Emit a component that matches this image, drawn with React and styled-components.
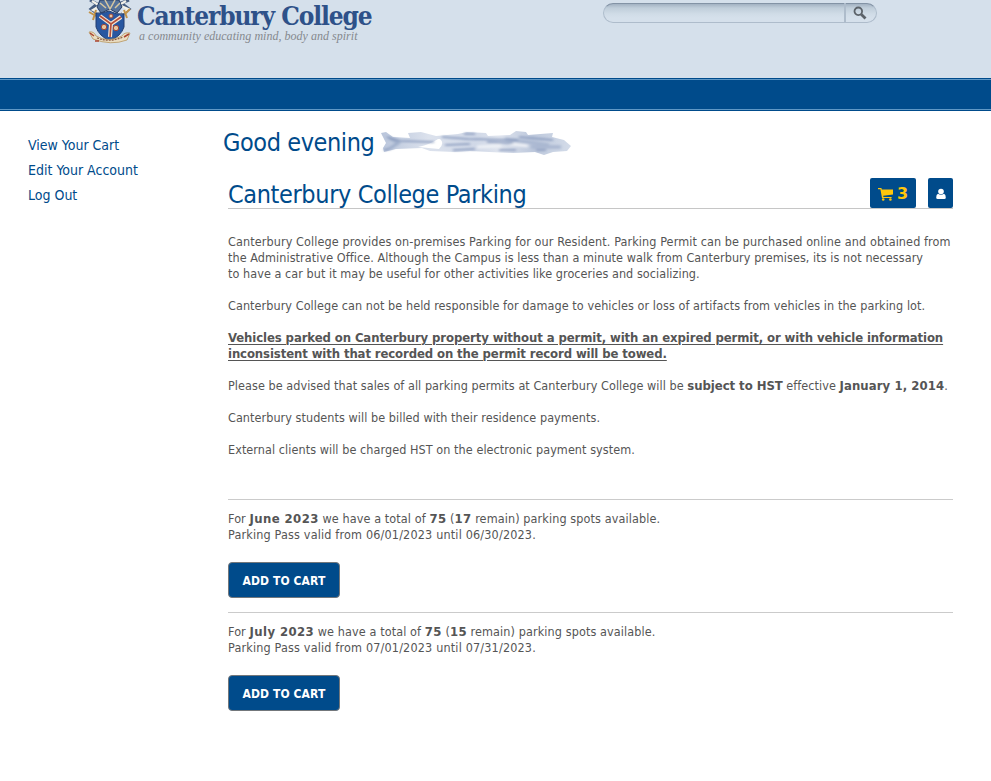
import React from 'react';
import styled, { createGlobalStyle } from 'styled-components';

const blue = '#004b8b';
const sans = '"DejaVu Sans Condensed", "DejaVu Sans", sans-serif';

const GlobalStyle = createGlobalStyle`
  * { box-sizing: border-box; }
  body { margin: 0; background: #fff; color: #555; font-family: ${sans}; font-stretch: condensed; }
  button, input { font: inherit; }
`;
const Page = styled.div`width: 991px; height: 781px; overflow: hidden;`;
const Header = styled.header`
  display: flex; align-items: flex-start; height: 78px; padding-left: 87px; background: #d5e0eb;
`;
const Brand = styled.div`display: flex; width: 516px;`;
const Crest = styled.svg`display: block; width: 46px; height: 44px; flex: none;`;
const BrandText = styled.div`padding-left: 4px; white-space: nowrap;`;
const BrandName = styled.div`
  height: 29px; line-height: 33px; font-family: "DejaVu Serif Condensed", "DejaVu Serif", serif;
  font-weight: 700; font-size: 26px; letter-spacing: -1.1px; color: #2e5189;
`;
const Tagline = styled.div`
  padding-left: 2px; height: 14px; line-height: 14px;
  font-family: "Liberation Serif", serif; font-style: italic; font-size: 12px; letter-spacing: 0.02px; color: #85898e;
`;
const Search = styled.form`display: flex; margin-top: 3px; height: 20px;`;
const SearchInput = styled.input`
  width: 242px; height: 20px; padding: 0 10px; outline: 0;
  border: 1px solid #aebccb; border-top-color: #8393a5; border-radius: 10px 0 0 10px;
  background: linear-gradient(#a3b2c2 0, #c0ceda 4px, #d0dce7 10px, #d5e0eb 14px);
`;
const SearchButton = styled.button`
  display: flex; align-items: center; width: 32px; height: 20px; padding: 0 0 0 6px;
  border: 1px solid #aebccb; border-top-color: #8393a5; border-radius: 0 10px 10px 0;
  background: linear-gradient(#a3b2c2 0, #c0ceda 4px, #d0dce7 10px, #d5e0eb 14px);
`;
const NavBar = styled.div`
  height: 33px; padding: 1px 0; background: ${blue};
  &::before { content: ''; display: block; height: 29px; border-top: 1px solid #5f98c6; border-bottom: 1px solid #5f98c6; }
`;
const Body = styled.div`display: flex;`;
const SideNav = styled.nav`
  display: flex; flex-direction: column; width: 223px; padding: 22px 0 0 28px;
`;
const SideLink = styled.a`height: 25px; line-height: 25px; font-size: 14px; color: ${blue};`;
const Main = styled.main`width: 730px; padding-top: 14px;`;
const Heading = styled.h1`
  margin: 0; font-weight: 400; font-size: 25px; line-height: ${p => p.$lead}px; letter-spacing: ${p => p.$track}px; color: ${blue}; white-space: nowrap;
`;
const Greeting = styled.div`display: flex; align-items: center; height: 36px;`;
const Redaction = styled.svg`display: block; margin: -2px 0 0 7px;`;
const Content = styled.div`margin-left: 5px; width: 725px;`;
const TitleRow = styled.div`
  display: flex; justify-content: space-between; height: 48px; padding-top: 17px; border-bottom: 1px solid #c6c6c6;
`;
const Actions = styled.div`display: flex; gap: 12px;`;
const Action = styled.button`
  display: flex; align-items: center; justify-content: center; gap: 4px; width: ${p => p.$w}px; height: 30px; padding: 1px 0 0;
  border: 0; border-radius: 2px; background: ${blue}; color: #ffc60b; font-weight: 700; font-size: 16px;
  font-family: "DejaVu Sans", sans-serif; font-stretch: normal;
`;
const Copy = styled.div`height: 290px; padding-top: 25px;`;
const Paragraph = styled.p`margin: 0 0 16px; font-size: 12.5px; line-height: 16px;`;
const Line = styled.span`display: block; height: 16px; white-space: nowrap; letter-spacing: ${p => p.$track ?? 0.06}px;`;
const Strong = styled.strong`font-size: 13px; letter-spacing: ${p => p.$track ?? 0.05}px;`;
const Warning = styled.strong`
  display: block; font-size: 13px; text-decoration: underline; text-decoration-thickness: 1px; text-underline-offset: 2px;
`;
const Offer = styled.section`
  height: 113px; padding-top: 11px; border-top: 1px solid #cbcbcb; font-size: 12.5px; line-height: 16px;
`;
const CartButton = styled.button`
  width: 112px; height: 36px; margin-top: 19px; padding: 2px 0 0;
  border: 1px solid #73777b; border-radius: 4px; background: ${blue}; color: #fff;
  font-weight: 700; font-size: 12px; letter-spacing: 0.1px;
`;

function CollegeCrest() {
  return (
    <Crest viewBox="0 0 46 44">
      <path d="M3 0l7 4-6 5 7 5M42 0l-8 3 8 6-7 5" fill="none" stroke="#465d80" strokeWidth="3" />
      <path d="M5 1l8 5-7 4 6 3M39 1l-7 4 9 4-6 4" fill="none" stroke="#f3f1e8" strokeWidth="2.2" />
      <path d="M13 0h19l3 7-5 6-7-4-9 4-4-6z" fill="#56739b" stroke="#263c63" />
      <path d="M18 0l5 9 5-9M13 3l6 5M33 3l-5 5" fill="none" stroke="#d7c7a0" strokeWidth="1.5" />
      <path d="M2 12l7 4M38 14l5-5M9 10l-3 10M37 10l3 8" stroke="#c39449" strokeWidth="2" />
      <path d="M9 13q6 1 13-2 7 4 15 3v13q-3 9-14 14-11-5-14-14z" fill="#2857a1" stroke="#223d6e" />
      <path d="M13 16l11 8 10-7M24 24l-1 13" fill="none" stroke="#f6e7d4" strokeWidth="4" />
      <path d="M13 16l11 8 10-7M24 24l-1 13" fill="none" stroke="#b54f3b" strokeWidth="1.7" />
      <g fill="#e7c59d" stroke="#9d4639"><circle cx="17" cy="27" r="2.7" /><circle cx="29" cy="28" r="2.7" /><circle cx="24" cy="16" r="2" /></g>
      <path d="M2 32q5-1 7 4 12 7 26 0 2-4 8-3l-3 7q-16 6-34-1z" fill="#e9ddc2" stroke="#b7955d" strokeWidth=".8" />
      <path d="M10 38q13 5 26-1" fill="none" stroke="#8c5a43" strokeWidth="1.2" strokeDasharray="2 1" />
      <path d="M3 33l4 3M42 34l-5 3M8 41h4" stroke="#ad4530" strokeWidth="1.5" />
    </Crest>
  );
}
function SearchIcon() {
  return <svg width="16" height="16" viewBox="0 0 16 16"><circle cx="6.3" cy="6.3" r="3.8" fill="none" stroke="#5b6269" strokeWidth="1.8" /><path d="M9.2 9.2l4.3 4.3" stroke="#5b6269" strokeWidth="2.8" /></svg>;
}
function CartIcon() {
  return <svg width="15" height="14" viewBox="0 0 15 14"><path d="M0 1h3.4l.4 1.4H15v5L5.2 8.8l.2 1.1h8.2V11H4L2.4 2.3H0z" fill="currentColor" /><circle cx="5.2" cy="12.5" r="1.3" fill="currentColor" /><circle cx="12.4" cy="12.5" r="1.3" fill="currentColor" /></svg>;
}
function UserIcon() {
  return <svg width="10" height="12" viewBox="0 0 10 12"><circle cx="5" cy="3.5" r="2.8" fill="#fff" /><path d="M2 5.7Q.2 6.5.2 9.5q0 1.5 1.5 1.5h6.6q1.5 0 1.5-1.5 0-3-1.8-3.8-3 2.3-6 0z" fill="#fff" /></svg>;
}
function NameSmudge() {
  return (
    <Redaction width="192" height="26" viewBox="0 0 192 26">
      <defs>
        <filter id="edge" x="-5%" y="-20%" width="110%" height="140%"><feGaussianBlur stdDeviation=".6" /></filter>
        <filter id="soft" x="-5%" y="-30%" width="110%" height="160%"><feGaussianBlur stdDeviation="1.5 .8" /></filter>
        <linearGradient id="mist"><stop stopColor="#b9c5db" /><stop offset=".25" stopColor="#dce2ed" /><stop offset=".5" stopColor="#d0d8e7" /><stop offset=".62" stopColor="#dfe4ee" /><stop offset=".8" stopColor="#bdc8dc" /><stop offset="1" stopColor="#d4dce9" /></linearGradient>
      </defs>
      <path filter="url(#edge)" d="M0 4l5-1 7 5 17 1-2-5 13-1 15 4 22-2 9-2 19 1 2 3 22-1 6-4 10 1 2 3 25-2-1 4 12 3 7 6-4 5-14 1-9 3-9-3-22 1-24-1-19-1-15 1-25-1-8-3-26 1-12 3-1-4 3-5z" fill="url(#mist)" />
      <path filter="url(#edge)" d="M57 10q-7 5-20 8l21 2q6-6 1-10z" fill="#fff" />
      <g fill="none" filter="url(#soft)">
        <path d="M8 9l9 5-9 6" stroke="#9fafcb" strokeWidth="3" /><path d="M124 10l44 6M150 18l30 0" stroke="#aab8d1" strokeWidth="3.5" /><path d="M96 18l24-1M129 15l18 2" stroke="#eef1f6" strokeWidth="3" />
        <path d="M3 21l5-1M6 8l13 4 34 1M61 8l26 2 50 1M72 21l22-1M106 13l26 1M118 21l17 0M83 5l11 0M64 16l25-1M155 21l10 0M138 8l34 3" stroke="#8294b9" strokeWidth="1.5" />
      </g>
    </Redaction>
  );
}
function MonthlyPass({ month, total, left, from, until }) {
  return (
    <Offer>
      <Line $track={0.11}>For <Strong $track={0.4}>{month}</Strong> we have a total of <Strong $track={0.3}>{total}</Strong> (<Strong $track={0.3}>{left}</Strong> remain) parking spots available.</Line>
      <Line $track={0.17}>Parking Pass valid from {from} until {until}.</Line>
      <CartButton>ADD TO CART</CartButton>
    </Offer>
  );
}
export default function App() {
  return (
    <Page>
      <GlobalStyle />
      <Header>
        <Brand>
          <CollegeCrest />
          <BrandText><BrandName>Canterbury College</BrandName><Tagline>a community educating mind, body and spirit</Tagline></BrandText>
        </Brand>
        <Search><SearchInput aria-label="Search" /><SearchButton type="button" aria-label="Search"><SearchIcon /></SearchButton></Search>
      </Header>
      <NavBar />
      <Body>
        <SideNav><SideLink>View Your Cart</SideLink><SideLink>Edit Your Account</SideLink><SideLink>Log Out</SideLink></SideNav>
        <Main>
          <Greeting><Heading $lead={36} $track={-0.42}>Good evening</Heading><NameSmudge /></Greeting>
          <Content>
            <TitleRow>
              <Heading as="h2" $lead={34} $track={-0.38}>Canterbury College Parking</Heading>
              <Actions><Action $w={46}><CartIcon />3</Action><Action $w={25} aria-label="Account"><UserIcon /></Action></Actions>
            </TitleRow>
            <Copy>
              <Paragraph>
                <Line $track={0.105}>Canterbury College provides on-premises Parking for our Resident. Parking Permit can be purchased online and obtained from</Line>
                <Line $track={0.07}>the Administrative Office. Although the Campus is less than a minute walk from Canterbury premises, its is not necessary</Line>
                <Line>to have a car but it may be useful for other activities like groceries and socializing.</Line>
              </Paragraph>
              <Paragraph><Line $track={0.07}>Canterbury College can not be held responsible for damage to vehicles or loss of artifacts from vehicles in the parking lot.</Line></Paragraph>
              <Paragraph as="div"><Warning>
                <Line $track={-0.1}>Vehicles parked on Canterbury property without a permit, with an expired permit, or with vehicle information</Line>
                <Line $track={-0.11}>inconsistent with that recorded on the permit record will be towed.</Line>
              </Warning></Paragraph>
              <Paragraph><Line>Please be advised that sales of all parking permits at Canterbury College will be <Strong $track={-0.05}>subject to HST</Strong> effective <Strong $track={0.08}>January 1, 2014</Strong>.</Line></Paragraph>
              <Paragraph><Line>Canterbury students will be billed with their residence payments.</Line></Paragraph>
              <Paragraph><Line $track={0.07}>External clients will be charged HST on the electronic payment system.</Line></Paragraph>
            </Copy>
            <MonthlyPass month="June 2023" total={75} left={17} from="06/01/2023" until="06/30/2023" />
            <MonthlyPass month="July 2023" total={75} left={15} from="07/01/2023" until="07/31/2023" />
          </Content>
        </Main>
      </Body>
    </Page>
  );
}
